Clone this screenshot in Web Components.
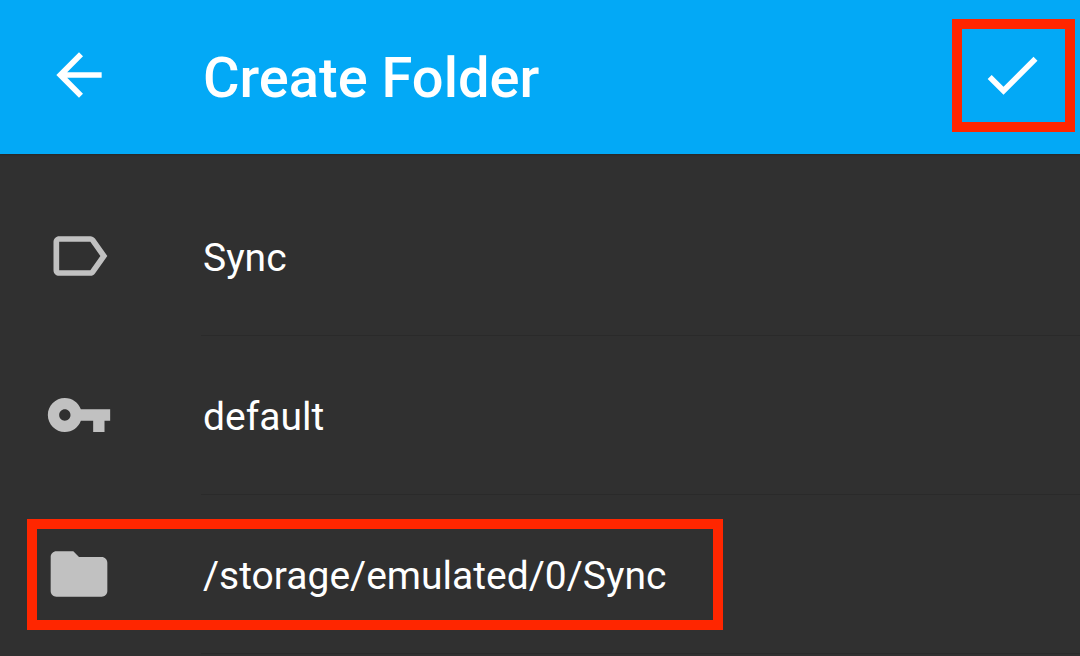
<!DOCTYPE html>
<html lang="en">
<head>
<meta charset="utf-8">
<meta name="viewport" content="width=device-width, initial-scale=1">
<title>Create Folder</title>
<style>
  body { margin: 0; background: #303030; color: #fff; font-family: Roboto, "Liberation Sans", sans-serif; }
</style>
</head>
<body>
<folder-screen></folder-screen>

<script>
const ICONS = {
  back: 'M20 11H7.83l5.59-5.59L12 4l-8 8 8 8 1.41-1.41L7.83 13H20v-2z',
  check: 'M9 16.17L4.83 12l-1.42 1.41L9 19 21 7l-1.41-1.41z',
  label: 'M17.63 5.84C17.27 5.33 16.67 5 16 5L5 5.01C3.9 5.01 3 5.9 3 7v10c0 1.1.9 1.99 2 1.99L16 19c.67 0 1.27-.33 1.63-.84L22 12l-4.37-6.16zM16 17H5V7h11l3.55 5L16 17z',
  key: 'M12.65 10C11.83 7.67 9.61 6 7 6c-3.31 0-6 2.69-6 6s2.69 6 6 6c2.61 0 4.83-1.67 5.65-4H17v4h4v-4h2v-4H12.65zM7 14c-1.1 0-2-.9-2-2s.9-2 2-2 2 .9 2 2-.9 2-2 2z',
  folder: 'M10 4H4c-1.1 0-1.99.9-1.99 2L2 18c0 1.1.9 2 2 2h16c1.1 0 2-.9 2-2V8c0-1.1-.9-2-2-2h-8l-2-2z'
};

class MdIcon extends HTMLElement {
  connectedCallback() {
    this.attachShadow({ mode: 'open' }).innerHTML = `
      <style>
        :host { display: block; width: 68px; height: 68px; }
        svg { display: block; width: 100%; height: 100%; fill: currentColor; }
      </style>
      <svg viewBox="0 0 24 24" aria-hidden="true"><path d="${ICONS[this.getAttribute('name')]}"/></svg>`;
  }
}

/* Red outline drawn over the element that it points out. */
class HighlightBox extends HTMLElement {
  connectedCallback() {
    this.attachShadow({ mode: 'open' }).innerHTML = `
      <style>
        :host { display: block; position: absolute; box-sizing: border-box; border: 10px solid #ff2600; pointer-events: none; }
      </style>`;
  }
}

class AppToolbar extends HTMLElement {
  connectedCallback() {
    this.attachShadow({ mode: 'open' }).innerHTML = `
      <style>
        :host { display: block; }
        header { display: flex; align-items: center; height: 154px; padding: 0 34px 0 45px; box-sizing: border-box; background: #03a9f6; box-shadow: 0 1px 2px rgba(0, 0, 0, .2); }
        h1 { flex: 1; min-width: 0; margin: 0; padding: 2px 0 0 90px; font-size: 56px; line-height: 64px; font-weight: 500; white-space: nowrap; }
        button { display: block; margin: 0 0 4px; padding: 0; border: 0; background: none; color: inherit; cursor: pointer; }
        .action { position: relative; }
        highlight-box { top: -22px; right: -29px; width: 123px; height: 113px; }
      </style>
      <header>
        <button type="button" aria-label="Back"><md-icon name="back"></md-icon></button>
        <h1><slot></slot></h1>
        <div class="action">
          <button type="button" aria-label="Create"><md-icon name="check"></md-icon></button>
          <highlight-box></highlight-box>
        </div>
      </header>`;
  }
}

class FieldRow extends HTMLElement {
  connectedCallback() {
    const label = this.getAttribute('label');
    const value = this.getAttribute('value');
    const picker = this.hasAttribute('picker');
    this.attachShadow({ mode: 'open' }).innerHTML = `
      <style>
        :host { display: block; position: relative; }
        .row { display: grid; grid-template-columns: 68px 1fr; column-gap: 88px; padding-left: 45px; align-items: stretch; }
        label { display: flex; align-items: center; padding-bottom: 2px; color: #c1c1c1; }
        .cell { display: flex; height: 158px; border-bottom: 1px solid #2a2a2a; min-width: 0; }
        input, button { flex: 1; min-width: 0; margin: 0; padding: 4px 0 0 2px; border: 0; outline: 0; background: none; color: #fff; font: 400 39px/48px Roboto, "Liberation Sans", sans-serif; text-align: left; }
        button { cursor: pointer; }
      </style>
      <div class="row">
        <label for="field" aria-label="${label}"><md-icon name="${this.getAttribute('icon')}"></md-icon></label>
        <div class="cell">${picker
          ? `<button id="field" type="button">${value}</button>`
          : `<input id="field" type="text" value="${value}">`}</div>
      </div>
      <slot></slot>`;
  }
}

class FolderScreen extends HTMLElement {
  connectedCallback() {
    this.attachShadow({ mode: 'open' }).innerHTML = `
      <style>
        :host { display: block; }
        main { padding-top: 23px; }
        highlight-box { top: 24px; left: 27px; width: 696px; height: 111px; }
      </style>
      <app-toolbar>Create Folder</app-toolbar>
      <main>
        <field-row icon="label" label="Folder label" value="Sync"></field-row>
        <field-row icon="key" label="Folder ID" value="default"></field-row>
        <field-row icon="folder" label="Directory" value="/storage/emulated/0/Sync" picker>
          <highlight-box></highlight-box>
        </field-row>
      </main>`;
  }
}

customElements.define('md-icon', MdIcon);
customElements.define('highlight-box', HighlightBox);
customElements.define('app-toolbar', AppToolbar);
customElements.define('field-row', FieldRow);
customElements.define('folder-screen', FolderScreen);
</script>
</body>
</html>
